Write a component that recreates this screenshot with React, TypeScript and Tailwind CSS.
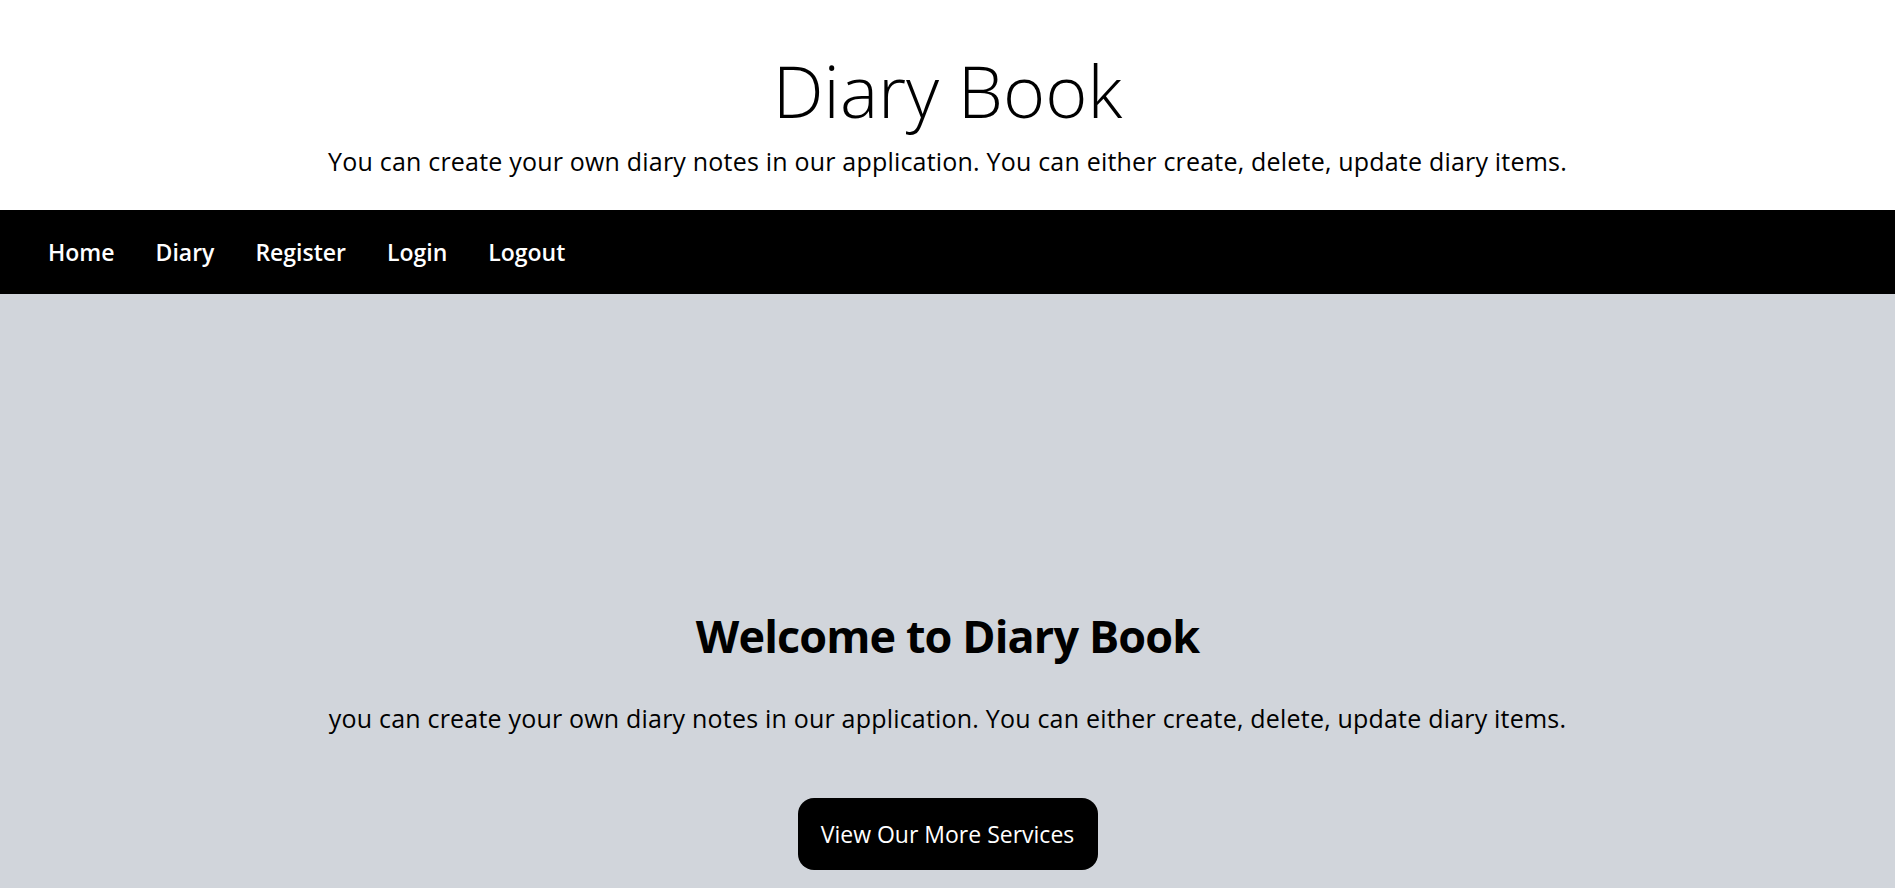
import React from "react";

export default function App() {
  const links = ["Home", "Diary", "Register", "Login", "Logout"];
  return (
    <div className="min-h-screen bg-white text-black" style={{ fontFamily: '"Open Sans", "Noto Sans", sans-serif' }}>
      <header className="flex flex-col items-center pt-[54px] pb-[33px]">
        <h1 className="text-7xl font-light leading-none mb-[19px]">Diary Book</h1>
        <p className="text-[25px] tracking-[0.2px] leading-8">
          You can create your own diary notes in our application. You can either create, delete, update diary items.
        </p>
      </header>
      <nav className="bg-black h-[84px] flex items-center px-12 gap-[41px]">
        {links.map((l) => (
          <a key={l} href="#" className="text-white text-[23px] font-semibold leading-8">
            {l}
          </a>
        ))}
      </nav>
      <section className="bg-[#d1d5db] h-[888px] flex flex-col items-center pt-[318px]">
        <h2 className="text-[45px] tracking-[-0.02em] font-bold leading-[48px] mb-[42px]">Welcome to Diary Book</h2>
        <p className="text-[25px] tracking-[0.2px] leading-8 mb-16">
          you can create your own diary notes in our application. You can either create, delete, update diary items.
        </p>
        <button className="bg-black text-white text-[23px] leading-8 w-[300px] h-[72px] rounded-2xl">
          View Our More Services
        </button>
      </section>
    </div>
  );
}
